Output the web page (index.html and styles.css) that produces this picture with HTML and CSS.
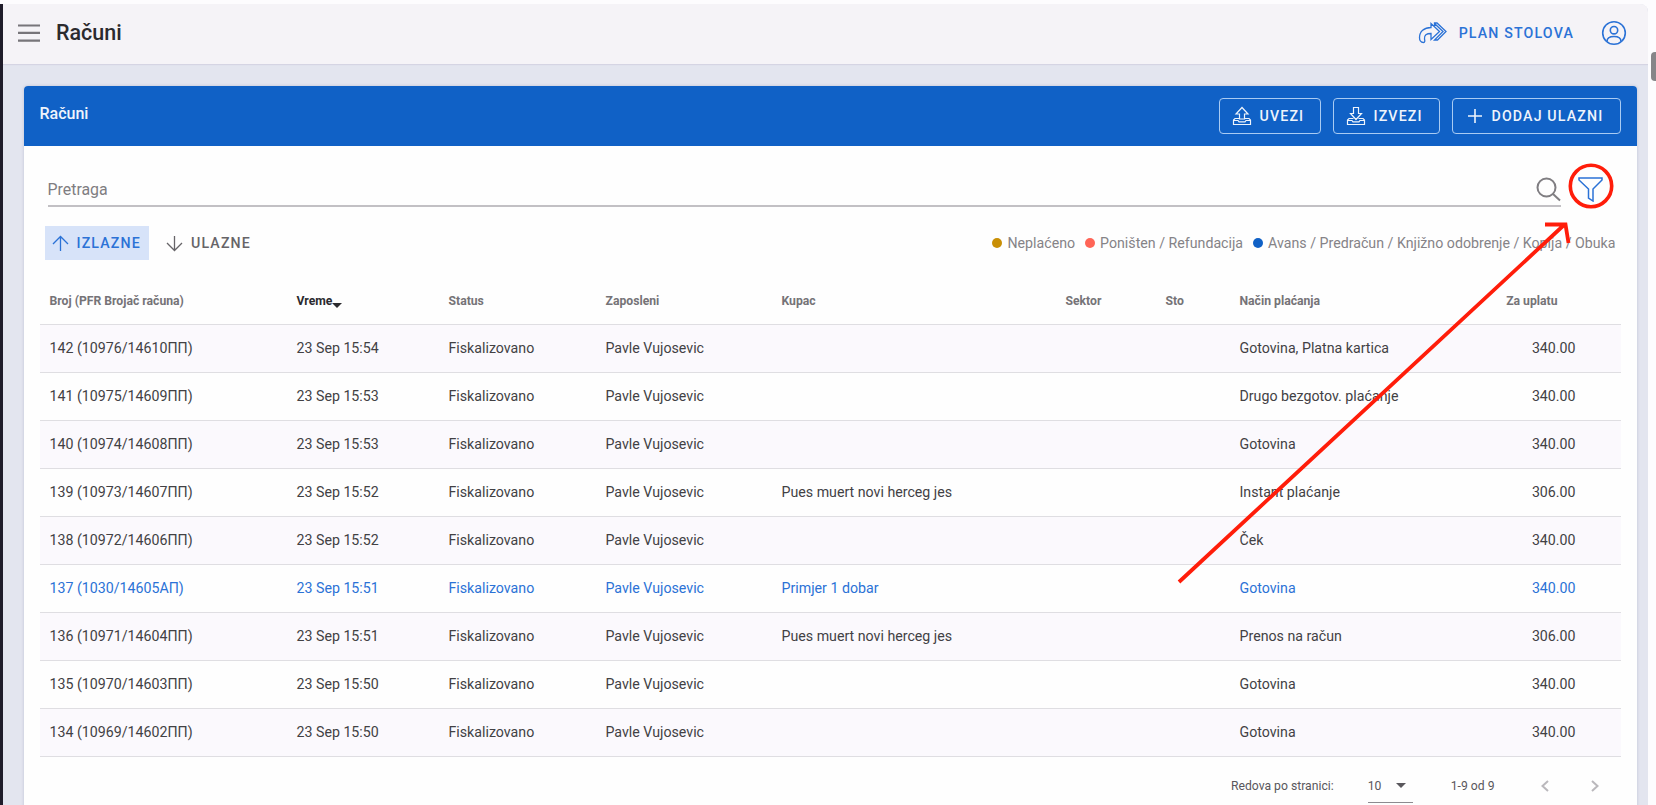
FILE: index.html
```html
<!DOCTYPE html>
<html lang="sr">
<head>
    <meta charset="utf-8">
    <title>Računi</title>
    <link rel="stylesheet" href="styles.css">
</head>
<body>
    <div class="app">
        <header class="topbar">
            <svg class="menu-icon" width="22" height="20" viewBox="0 0 22 20"><path d="M0 2.500h22M0 9.800h22M0 17.600h22"/></svg>
            <h1>Računi</h1>
            <a class="plan-link">
                <svg width="30" height="24" viewBox="0 0 30 24"><path d="M5.500 21.500C2.500 21.500 1.500 19 1.500 16.500C1.500 10.500 6 6.500 13 6.500V2.500L21.500 10.500L13 18.500V12.500C8.500 12.500 6 14 6.500 18C7 19.500 7 21.500 5.500 21.500zM16.500 5V2H19L28 10.500L19.500 19H16.500L25 10.500L16.500 2.500"/></svg>
                <span>PLAN STOLOVA</span>
            </a>
            <svg class="user-icon" width="26" height="26" viewBox="0 0 26 26"><circle cx="13" cy="13" r="11.300"/><circle cx="13" cy="10.200" r="3.700"/><path d="M6 21.500C6 17.500 8.500 16.500 13 16.500S20 17.500 20 21.500"/></svg>
        </header>

        <main class="card">
            <div class="card-header">
                <h2>Računi</h2>
                <button class="btn btn-import">
                    <svg width="20" height="20" viewBox="0 0 20 20"><path d="M7.500 13V8H4L10 1.500L16 8H12.500V13zM7.500 12.500H3L1.500 14V18.500H18.500V14L17 12.500H12.500M2 14.500H6L7 15.800H13L14 14.500H18"/></svg>
                    <span>UVEZI</span>
                </button>
                <button class="btn btn-export">
                    <svg width="20" height="20" viewBox="0 0 20 20"><path d="M7.500 1.500V7.500H4.500L10 13.500L15.500 7.500H12.500V1.500zM7.500 12.500H3L1.500 14V18.500H18.500V14L17 12.500H12.500M2 14.500H6L7 15.800H13L14 14.500H18"/></svg>
                    <span>IZVEZI</span>
                </button>
                <button class="btn btn-add">
                    <svg width="16" height="16" viewBox="0 0 16 16"><path d="M8 1v14M1 8h14"/></svg>
                    <span>DODAJ ULAZNI</span>
                </button>
            </div>

            <div class="search-row">
                <div class="search-field">
                    <span>Pretraga</span>
                    <svg width="26" height="26" viewBox="0 0 26 26"><circle cx="11.500" cy="11.500" r="9"/><path d="M18 18L25 24.500"/></svg>
                </div>
                <div class="filter">
                    <svg width="26" height="26" viewBox="0 0 26 26"><path d="M2 2H25V4L16 13V25L11.500 22V13L2 4z"/></svg>
                    <!-- marker over the filter button -->
                    <svg class="marker" width="46" height="46" viewBox="0 0 46 46"><circle cx="23" cy="23" r="20.700"/></svg>
                </div>
            </div>

            <div class="tabs-row">
                <div class="tab active">
                    <svg width="17" height="17" viewBox="0 0 17 17"><path d="M8.500 16V1.500M1 9L8.500 1.500L16 9"/></svg>
                    <span>IZLAZNE</span>
                </div>
                <div class="tab">
                    <svg width="17" height="17" viewBox="0 0 17 17"><path d="M8.500 1V15.500M1 8L8.500 15.500L16 8"/></svg>
                    <span>ULAZNE</span>
                </div>
                <div class="legend">
                    <i class="dot unpaid"></i><span>Neplaćeno</span>
                    <i class="dot canceled"></i><span>Poništen / Refundacija</span>
                    <i class="dot advance"></i><span>Avans / Predračun / Knjižno odobrenje / Kopija / Obuka</span>
                </div>
            </div>

            <table class="invoices">
                <colgroup>
                    <col class="c-number"><col class="c-time"><col class="c-status"><col class="c-employee"><col class="c-customer"><col class="c-sector"><col class="c-table"><col class="c-payment"><col class="c-total">
                </colgroup>
                <thead>
                    <tr>
                        <th>Broj (PFR Brojač računa)</th>
                        <th class="sorted">Vreme<i class="caret"></i></th>
                        <th>Status</th>
                        <th>Zaposleni</th>
                        <th>Kupac</th>
                        <th>Sektor</th>
                        <th>Sto</th>
                        <th>Način plaćanja</th>
                        <th class="total">Za uplatu</th>
                    </tr>
                </thead>
                <tbody>
                    <tr><td>142 (10976/14610ПП)</td><td>23 Sep 15:54</td><td>Fiskalizovano</td><td>Pavle Vujosevic</td><td></td><td></td><td></td><td>Gotovina, Platna kartica</td><td class="total">340.00</td></tr>
                    <tr><td>141 (10975/14609ПП)</td><td>23 Sep 15:53</td><td>Fiskalizovano</td><td>Pavle Vujosevic</td><td></td><td></td><td></td><td>Drugo bezgotov. plaćanje</td><td class="total">340.00</td></tr>
                    <tr><td>140 (10974/14608ПП)</td><td>23 Sep 15:53</td><td>Fiskalizovano</td><td>Pavle Vujosevic</td><td></td><td></td><td></td><td>Gotovina</td><td class="total">340.00</td></tr>
                    <tr><td>139 (10973/14607ПП)</td><td>23 Sep 15:52</td><td>Fiskalizovano</td><td>Pavle Vujosevic</td><td>Pues muert novi herceg jes</td><td></td><td></td><td>Instant plaćanje</td><td class="total">306.00</td></tr>
                    <tr><td>138 (10972/14606ПП)</td><td>23 Sep 15:52</td><td>Fiskalizovano</td><td>Pavle Vujosevic</td><td></td><td></td><td></td><td>Ček</td><td class="total">340.00</td></tr>
                    <tr class="blue"><td>137 (1030/14605АП)</td><td>23 Sep 15:51</td><td>Fiskalizovano</td><td>Pavle Vujosevic</td><td>Primjer 1 dobar</td><td></td><td></td><td>Gotovina</td><td class="total">340.00</td></tr>
                    <tr><td>136 (10971/14604ПП)</td><td>23 Sep 15:51</td><td>Fiskalizovano</td><td>Pavle Vujosevic</td><td>Pues muert novi herceg jes</td><td></td><td></td><td>Prenos na račun</td><td class="total">306.00</td></tr>
                    <tr><td>135 (10970/14603ПП)</td><td>23 Sep 15:50</td><td>Fiskalizovano</td><td>Pavle Vujosevic</td><td></td><td></td><td></td><td>Gotovina</td><td class="total">340.00</td></tr>
                    <tr><td>134 (10969/14602ПП)</td><td>23 Sep 15:50</td><td>Fiskalizovano</td><td>Pavle Vujosevic</td><td></td><td></td><td></td><td>Gotovina</td><td class="total">340.00</td></tr>
                </tbody>
            </table>

            <div class="pager">
                <span class="pager-label">Redova po stranici:</span>
                <div class="page-size"><span>10</span><i class="caret"></i></div>
                <span class="range">1-9 od 9</span>
                <svg class="prev" width="10" height="14" viewBox="0 0 10 14"><path d="M8 2L2.500 7L8 12"/></svg>
                <svg class="next" width="10" height="14" viewBox="0 0 10 14"><path d="M2 2L7.500 7L2 12"/></svg>
            </div>
        </main>
    </div>

    <div class="scroll-thumb"></div>
    <svg class="pointer" width="400" height="370" viewBox="0 0 400 370"><path d="M4 367L389 10M370 9.500H390.500L393.500 28"/></svg>
</body>
</html>
```

FILE: styles.css
```css
* { box-sizing: border-box; }
body {
    margin: 0;
    height: 805px;
    padding: 4px 8px 0 0;
    overflow: hidden;
    background: #fdfcfe;
    font-family: Roboto, "Noto Sans", sans-serif;
    color: #424144;
}
svg { fill: none; stroke: currentColor; flex: none; }
h1, h2 { margin: 0; font-weight: 500; }

.app {
    height: 801px;
    border-left: 3px solid #1f1c2a;
    border-top-right-radius: 8px;
    background: #e3e5ef;
    overflow: hidden;
}

.topbar {
    display: flex;
    align-items: center;
    height: 60px;
    padding: 0 21px 2px 15px;
    background: #f5f3f7;
    box-shadow: 0 1px 1px #d5d4e3;
}
.topbar h1 { margin: -2px 0 0 16px; font-size: 21.500px; color: #2b2a2e; }
.menu-icon { color: #77757a; stroke-width: 2.2; }
.plan-link {
    display: flex;
    align-items: center;
    gap: 11px;
    margin-left: auto;
    color: #2b72d6;
    font-size: 14.200px;
    font-weight: 500;
    letter-spacing: 1.150px;
}
.plan-link svg { stroke-width: 1.300; }
.user-icon { margin-left: 27px; color: #2b72d6; stroke-width: 1.600; }

.card {
    width: 1613px;
    height: 740px;
    margin: 22px 0 0 20.500px;
    background: #fefefe;
    border-radius: 4px 4px 0 0;
    box-shadow: 0 0 3px rgba(70, 80, 130, .25);
}
.card-header {
    display: flex;
    height: 60px;
    padding: 12px 16px 0;
    background: #1061c6;
    border-radius: 4px 4px 0 0;
    color: #eef4fc;
}
.card-header h2 { margin: 6px auto 0 0; font-size: 16px; line-height: 19px; }
.btn {
    display: flex;
    align-items: center;
    height: 36px;
    padding: 0 0 0 12px;
    gap: 8px;
    border: 1px solid #a9cbf3;
    border-radius: 4px;
    background: none;
    color: inherit;
    font: 500 14.200px Roboto, sans-serif;
    letter-spacing: 1.150px;
}
.btn svg { stroke-width: 1.200; }
.btn-import { width: 102px; }
.btn-export { width: 107px; margin-left: 12px; }
.btn-add { width: 169px; margin-left: 12px; padding-left: 14px; gap: 9px; }
.btn-add svg { stroke-width: 1.600; }

.search-row { display: flex; height: 61px; padding-left: 24px; }
.search-field {
    display: flex;
    justify-content: space-between;
    width: 1513px;
    padding-top: 30px;
    border-bottom: 2px solid #c2c0c4;
    color: #7f7d81;
}
.search-field span { padding-top: 4px; line-height: 19px; font-size: 15.900px; }
.search-field svg { color: #807e82; stroke-width: 2; }
.filter { position: relative; padding: 30px 0 0 16px; color: #2b72d6; }
.filter > svg:first-child { stroke-width: 1.500; }
.marker { position: absolute; left: 7px; top: 17px; color: #ff1d0a; stroke-width: 3.600; }

.tabs-row { display: flex; align-items: center; height: 34px; margin: 19px 21px 0; }
.tab {
    display: flex;
    align-items: center;
    gap: 8px;
    height: 34px;
    padding: 0 8px 0 7px;
    color: #666468;
    font-size: 14.200px;
    font-weight: 500;
    letter-spacing: 1.150px;
}
.tab + .tab { margin-left: 10px; }
.tab.active { background: #d7e3f9; color: #2b72d6; }
.tab svg { stroke-width: 1.300; }
.legend {
    display: flex;
    align-items: center;
    margin-left: auto;
    font-size: 14.200px;
    color: #858387;
}
.dot { width: 10px; height: 10px; margin: 0 5px 0 10px; border-radius: 50%; }
.unpaid { background: #c98f05; }
.canceled { background: #ff6557; }
.advance { background: #1061c6; }

.invoices {
    width: 1581px;
    margin: 16px 0 0 16px;
    table-layout: fixed;
    border-collapse: collapse;
    font-size: 14.200px;
}
.c-number { width: 247px; }
.c-time { width: 152px; }
.c-status { width: 157px; }
.c-employee { width: 176px; }
.c-customer { width: 284px; }
.c-sector { width: 100px; }
.c-table { width: 74px; }
.c-payment { width: 230px; }
th, td { padding: 0 0 0 10px; text-align: left; white-space: nowrap; }
th { height: 48px; padding-top: 2px; font-size: 12.200px; font-weight: 700; color: #757377; }
.sorted { color: #2b2a2e; }
.caret { display: inline-block; border: 5px solid transparent; border-top-color: currentColor; border-bottom: 0; }
.sorted .caret { vertical-align: -3px; }
td { height: 48px; border-top: 1px solid #dfdee2; border-bottom: 1px solid #dfdee2; }
tbody tr:nth-child(odd) { background: #fbf9fd; }
.blue td { color: #2b72d6; }
td.total { padding-right: 45px; text-align: right; }
th.total { padding-right: 63px; text-align: right; }

.pager {
    display: flex;
    align-items: center;
    height: 46px;
    margin-top: 6px;
    padding: 0 37px 0 0;
    justify-content: flex-end;
    font-size: 12.200px;
    color: #59575c;
}
.page-size {
    display: flex;
    align-items: center;
    gap: 15px;
    width: 45px;
    height: 34px;
    margin: 0 38px 0 34px;
    padding-top: 1px;
    border-bottom: 1px solid #8d8b90;
}
.prev, .next { color: #bab8bc; stroke-width: 2; }
.prev { margin-left: 45px; }
.next { margin-left: 40px; }

.scroll-thumb {
    position: absolute;
    right: 0;
    top: 52px;
    width: 5px;
    height: 29px;
    border-radius: 4px 0 0 4px;
    background: #868588;
}
.pointer { position: absolute; left: 1175px; top: 215px; color: #ff1d0a; stroke-width: 3.800; }
```
